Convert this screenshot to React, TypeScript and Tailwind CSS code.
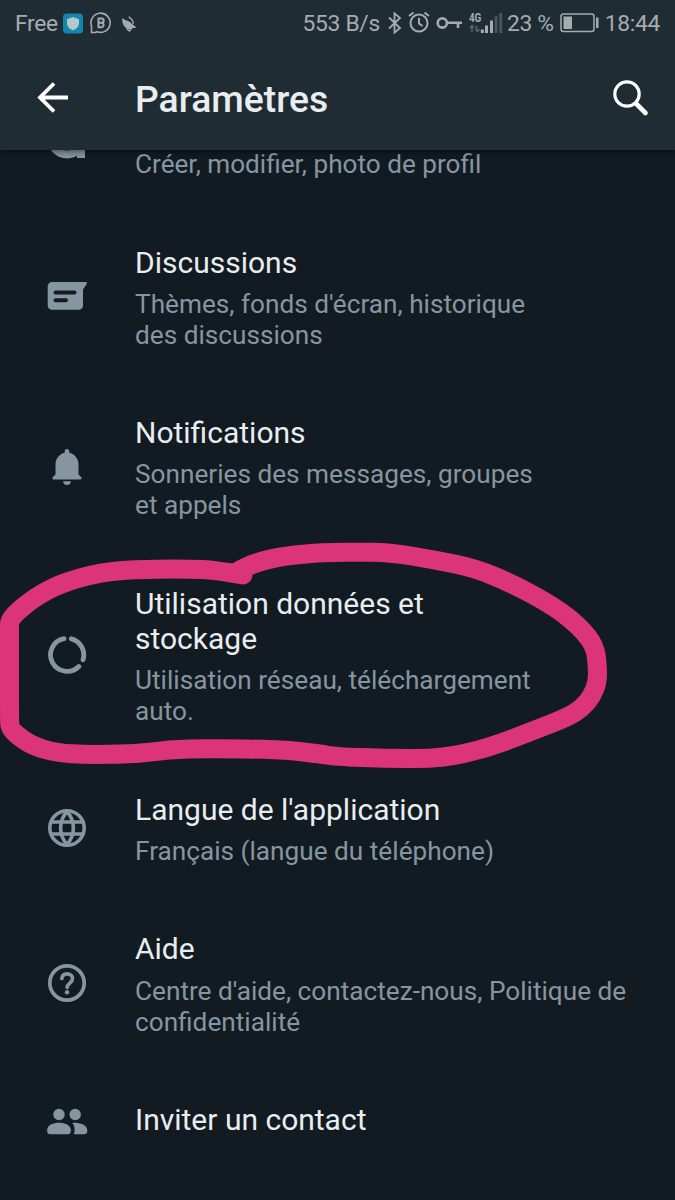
import type { ReactNode } from "react";

type Point = [number, number];

// Pen stroke drawn by hand around the storage entry
const strokePoints: Point[] = [
  [243, 575], [215, 570], [190, 569], [160, 569], [110, 570.5], [67, 581], [40, 594], [20, 609],
  [9.5, 620], [9.5, 628], [9.5, 670], [9.5, 720], [10, 728], [18, 736], [33, 746], [57, 753],
  [87, 754.7], [130, 754], [152, 752], [180, 748.7], [240, 748.7], [287, 750], [320, 754],
  [335, 756.5], [388, 758.7], [442, 758.5], [488, 748], [535, 730], [568, 717], [582, 708],
  [592, 696], [597.5, 682], [597.5, 666], [595, 646], [580, 627], [555, 607], [515, 585],
  [475, 568], [435, 560], [388, 552], [355, 552.3], [335, 552.3], [313, 553], [277, 557],
  [252, 564], [238, 571],
];

const smoothPath = (points: Point[]) => {
  let d = `M${points[0][0]} ${points[0][1]}`;
  for (let i = 1; i < points.length - 1; i++) {
    const [x, y] = points[i];
    const [nx, ny] = points[i + 1];
    d += `Q${x} ${y} ${(x + nx) / 2} ${(y + ny) / 2}`;
  }
  const last = points[points.length - 1];
  return `${d}L${last[0]} ${last[1]}`;
};

const ProfileIcon = () => (
  <svg width="40" height="40" viewBox="0 0 40 40" fill="none" stroke="currentColor" strokeWidth="8">
    <circle cx="20" cy="20" r="15.5" />
    <path d="M34 16v23" />
  </svg>
);

const ChatIcon = () => (
  <svg width="40" height="40" viewBox="0 0 40 40">
    <path
      fill="currentColor"
      d="M5 6h33.500c1.400 0 1.800 1.200 1 2.200L36 13.500V29.500a4.300 4.300 0 0 1-4.300 4.300H5A4.300 4.300 0 0 1 .7 29.500V10.300A4.300 4.300 0 0 1 5 6z"
    />
    <path stroke="#121b22" strokeWidth="4" strokeLinecap="round" d="M8.500 16.500h19M8.500 24.200h10.500" />
  </svg>
);

const BellIcon = () => (
  <svg width="40" height="40" viewBox="0 0 40 40" fill="currentColor">
    <path d="M20 2c1.500 0 2.300 1 2.300 2.400v1.300c5.400 1.200 9.200 6 9.200 11.500v10.300l2.600 2.600c.9 1 .4 2.400-.9 2.400H6.800c-1.300 0-1.800-1.400-.9-2.400l2.600-2.600V17.200c0-5.500 3.800-10.300 9.200-11.500V4.400C17.700 3 18.500 2 20 2z" />
    <path d="M16.200 34.200h7.600a3.800 3.800 0 0 1-7.600 0z" />
  </svg>
);

const DataIcon = () => (
  <svg width="40" height="40" viewBox="0 0 40 40" fill="none" stroke="currentColor" strokeWidth="4.800" strokeLinecap="round">
    <path d="M17 3.700A16.500 16.500 0 1 0 31.800 31.500" />
    <path d="M24.300 3.800A16.500 16.500 0 0 1 36 24.800" />
  </svg>
);

const GlobeIcon = () => (
  <svg width="40" height="40" viewBox="0 0 40 40" fill="none" stroke="currentColor" strokeWidth="3.600">
    <circle cx="20" cy="20" r="17.200" />
    <path d="M20 3.500c-8.500 9.500-8.500 23.500 0 33M20 3.500c8.500 9.500 8.500 23.500 0 33" />
    <path d="M4 14h32M4 26h32" />
  </svg>
);

const HelpIcon = () => (
  <svg width="40" height="40" viewBox="0 0 40 40" fill="none" stroke="currentColor" strokeWidth="3.700">
    <circle cx="20" cy="20" r="17.200" />
    <path strokeLinecap="round" d="M14.800 15.500c.4-3 2.500-4.700 5.400-4.700 3 0 5.300 2 5.300 4.800 0 4.400-5.300 4.500-5.300 8.700" />
    <circle cx="20" cy="29.300" r="2.200" fill="currentColor" stroke="none" />
  </svg>
);

const PeopleIcon = () => (
  <svg width="42" height="40" viewBox="0 -3.500 42 40" fill="currentColor">
    <circle cx="13" cy="13" r="5.700" />
    <circle cx="29.200" cy="13" r="5.700" />
    <path d="M1.200 28.500c0-4.700 6-7.200 11.800-7.200s11.800 2.500 11.800 7.200v1.200a3 3 0 0 1-3 3H4.200a3 3 0 0 1-3-3z" />
    <path d="M26.300 21.400c7-.5 14.900 2 14.900 7.100v1.200a3 3 0 0 1-3 3H27.800c.6-1.300.8-2.700.8-4.200 0-2.800-.4-5.200-2.300-7.100z" />
  </svg>
);

interface RowProps {
  icon: ReactNode;
  title: ReactNode;
  subtitle?: ReactNode;
}

const Row = ({ icon, title, subtitle }: RowProps) => (
  <li className="flex shrink-0 items-center pt-[32.600px] pb-[31.800px]">
    <div className="-mt-[4px] -mb-[0.500px] flex w-[134.500px] shrink-0 justify-center text-[#8696a0]">{icon}</div>
    <div className="ml-[0.500px] whitespace-nowrap">
      <h2 className="text-[30px] leading-[35.500px] text-[#e9edef]">{title}</h2>
      {subtitle && (
        <p className="mt-[8.700px] text-[26.200px] leading-[31px] text-[#8696a0]">{subtitle}</p>
      )}
    </div>
  </li>
);

const StatusBar = () => (
  <div className="flex h-[47px] items-center px-[15px] text-[22.800px] leading-none tracking-[-0.300px] whitespace-nowrap text-[#a5acb0]">
    <span className="mt-px">Free</span>
    <svg className="ml-[5px] shrink-0" width="20" height="21" viewBox="0 0 21 21">
      <rect width="21" height="21" rx="4" fill="#1187b0" />
      <path d="M10.500 3.800 16.800 6v4c0 3.800-2.500 6-6.300 7.600C6.700 16 4.200 13.800 4.200 10V6z" fill="#b9c6cc" />
    </svg>
    <svg className="mb-px ml-[7px] shrink-0" width="22" height="22" viewBox="0 0 22 22" fill="none" stroke="currentColor" strokeWidth="1.600">
      <path d="M1.500 20.500V14A9.600 9.600 0 1 1 7 19.700L5.500 20.500z" />
      <path strokeWidth="2" d="M8.500 6.500h3a2.100 2.100 0 0 1 0 4.300h-3zM8.500 10.800h3.300a2.300 2.300 0 0 1 0 4.500H8.500z" />
    </svg>
    <svg className="ml-[10px] shrink-0" width="15" height="16" viewBox="0 0 17 18" fill="currentColor">
      <path d="M.5 2c2.500 3.500 6.500 2.800 9.200 5.300 1 1 1.700 2.200 3 2.500l3.800 3.400-4.300.2c-1.500 1.600-3.500 1.800-5.200 1.300C2.800 13.500-.5 8 .5 2z" />
      <path d="M7.500 1c3.200 1.700 5 4.200 5.300 8M5 14l3.500 3 2-2.600" fill="none" stroke="currentColor" strokeWidth="1.500" />
    </svg>
    <div className="flex-1" />
    <span className="mt-px">553 B/s</span>
    <svg className="mb-px ml-[7px] shrink-0" width="16" height="22" viewBox="0 0 16 22" fill="none" stroke="currentColor" strokeWidth="1.800">
      <path d="m2 5.500 11 10.500-5.500 4.700V1.300L13 6 2 16.500" />
    </svg>
    <svg className="mb-[3px] ml-[5px] shrink-0" width="22" height="22" viewBox="0 0 22 22" fill="none" stroke="currentColor" strokeWidth="2">
      <circle cx="11" cy="12" r="8.500" />
      <path d="M11 7v5.500l3.500 2.500M1 5l4.500-3.500M21 5l-4.500-3.500" />
    </svg>
    <svg className="mb-px ml-[6px] shrink-0" width="27" height="14" viewBox="0 0 27 14" fill="none" stroke="currentColor" strokeWidth="2.600">
      <circle cx="6.300" cy="7" r="4.600" />
      <path d="M11 6.800h15M22 7v5" />
    </svg>
    <svg className="mb-[2px] ml-[6px] shrink-0" width="34" height="23" viewBox="0 0 34 23">
      <text x="0" y="10.500" fill="currentColor" fontSize="12.500" fontWeight="700" textLength="12" lengthAdjust="spacingAndGlyphs">4G</text>
      <path d="M3 21v-5.500M.8 17 3 14.500 5 17M7.500 14.500V20M6.500 18l2 2.500 2-2.500" stroke="#56616a" strokeWidth="1.600" fill="none" />
      <path d="M11.800 18.500h3V22h-3zM16 14.500h3V22h-3zM21 9.500h3V22h-3z" fill="currentColor" />
      <path d="M25.700 5h2.800v17h-2.800zM30.300 2h2.800v20h-2.800z" fill="#4a555c" />
    </svg>
    <span className="mt-px ml-[4px]">23 %</span>
    <svg className="mb-px ml-[6px] shrink-0" width="39" height="20" viewBox="0 0 39 20">
      <rect x="1" y="1" width="33" height="17.500" rx="2.500" fill="none" stroke="currentColor" strokeWidth="1.500" />
      <path d="M3.500 3.500h8.500V16H3.500zM36 4.500h2.500V15H36z" fill="currentColor" />
    </svg>
    <span className="mt-px ml-[6px]">18:44</span>
  </div>
);

export default function App() {
  return (
    <div className="relative flex h-[1200px] w-[675px] flex-col overflow-hidden bg-[#121b22] font-['Roboto',sans-serif]">
      <header className="z-10 h-[150px] shrink-0 bg-[#202c33] shadow-[0_2px_6px_rgba(0,0,0,0.45)]">
        <StatusBar />
        <div className="flex h-[102px] items-center">
          <svg className="ml-[37px] shrink-0" width="32" height="32" viewBox="0 0 32 32" fill="none" stroke="#fff" strokeWidth="3.800">
            <path d="M31 15.500H3.500M17 1.500l-14 14 14 14" />
          </svg>
          <h1 className="mt-[3px] ml-[66px] flex-1 text-[37.300px] leading-none font-medium text-[#e9edef]">Paramètres</h1>
          <svg className="mr-[26px] shrink-0" width="37" height="37" viewBox="0 0 37 37" fill="none" stroke="#fff">
            <circle cx="15" cy="14" r="12.200" strokeWidth="3.200" />
            <path d="m24.500 24 9 9" strokeWidth="4.600" strokeLinecap="round" />
          </svg>
        </div>
      </header>

      <main className="flex min-h-0 flex-1 flex-col overflow-hidden">
        <div className="flex h-[62px] shrink-0 items-end">
          <div className="mb-[53px] flex w-[134px] shrink-0 justify-center text-[#8696a0]">
            <ProfileIcon />
          </div>
          <p className="mb-[32.200px] ml-px text-[26.150px] leading-[31px] text-[#8696a0]">
            Créer, modifier, photo de profil
          </p>
        </div>
        <ul className="flex flex-col">
          <Row
            icon={<ChatIcon />}
            title="Discussions"
            subtitle={<>Thèmes, fonds d'écran, historique<br />des discussions</>}
          />
          <Row
            icon={<BellIcon />}
            title="Notifications"
            subtitle={<>Sonneries des messages, groupes<br />et appels</>}
          />
          <Row
            icon={<DataIcon />}
            title={<>Utilisation données et<br />stockage</>}
            subtitle={<>Utilisation réseau, téléchargement<br />auto.</>}
          />
          <Row
            icon={<GlobeIcon />}
            title="Langue de l'application"
            subtitle="Français (langue du téléphone)"
          />
          <Row
            icon={<HelpIcon />}
            title="Aide"
            subtitle={<>Centre d'aide, contactez-nous, Politique de<br />confidentialité</>}
          />
          <Row icon={<PeopleIcon />} title="Inviter un contact" />
        </ul>
      </main>

      <svg className="pointer-events-none absolute inset-0 z-20" width="675" height="1200" viewBox="0 0 675 1200" fill="none">
        <path d={smoothPath(strokePoints)} stroke="#dc3577" strokeWidth="19" strokeLinecap="round" strokeLinejoin="round" />
      </svg>
    </div>
  );
}
